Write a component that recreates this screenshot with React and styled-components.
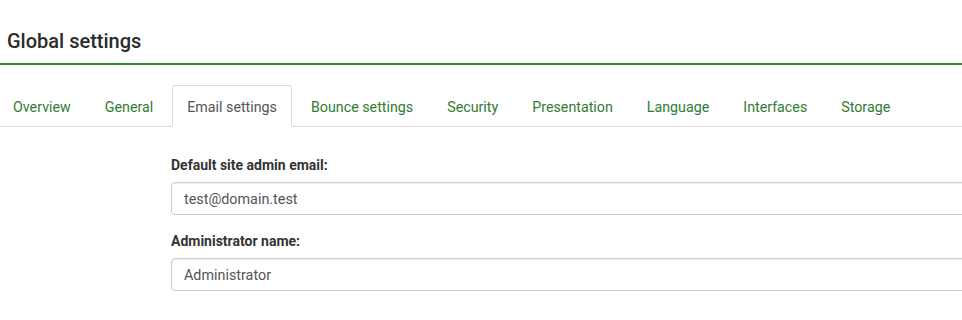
import React from "react";
import styled, { createGlobalStyle } from "styled-components";

const Global = createGlobalStyle`
  html, body { margin: 0; padding: 0; background: #fff; overflow: hidden; }
  body { font-family: Roboto, "Liberation Sans", Arial, sans-serif; font-size: 14px; line-height: 20px; color: #333; }
`;

const Page = styled.div`
  width: 962px;
  overflow: hidden;
`;

const Header = styled.div`
  padding: 29px 0 0 7px;
  height: 34px;
  border-bottom: 2px solid #2f8a35;
`;

const Title = styled.h1`
  margin: 0;
  font-size: 20px;
  font-weight: 500;
  line-height: 24px;
  color: #2b2b2b;
`;

const Tabs = styled.ul`
  list-style: none;
  margin: 20px 0 0 0;
  padding: 0;
  display: flex;
  border-bottom: 1px solid #ddd;
`;

const Tab = styled.li`
  margin: 0 4px -1px 0;
  &:first-child { margin-left: -2px; }
`;

const TabLink = styled.a`
  display: block;
  padding: 11px 14px 9px;
  font-size: 14.25px;
  line-height: 20px;
  border: 1px solid ${(p) => (p.$active ? "#ddd" : "transparent")};
  border-bottom-color: ${(p) => (p.$active ? "#fff" : "transparent")};
  border-radius: 4px 4px 0 0;
  background: ${(p) => (p.$active ? "#fff" : "transparent")};
  color: ${(p) => (p.$active ? "#555" : "#2e7d32")};
  text-decoration: none;
  cursor: pointer;
`;

const Form = styled.form`
  padding: 28px 0 0 171px;
`;

const Group = styled.div`
  margin-bottom: 16px;
`;

const Label = styled.label`
  display: block;
  font-weight: 700;
  margin-bottom: 7px;
  color: #333;
`;

const Input = styled.input`
  display: block;
  box-sizing: border-box;
  width: 900px;
  height: 33px;
  padding: 7px 12px 5px;
  font-family: inherit;
  font-size: 14.35px;
  color: #555;
  background: #fff;
  border: 1px solid #ccc;
  border-radius: 4px;
  box-shadow: inset 0 1px 1px rgba(0, 0, 0, 0.075);
  outline: none;
`;

const tabs = [
  "Overview",
  "General",
  "Email settings",
  "Bounce settings",
  "Security",
  "Presentation",
  "Language",
  "Interfaces",
  "Storage",
];

export default function App() {
  return (
    <Page>
      <Global />
      <Header>
        <Title>Global settings</Title>
      </Header>
      <Tabs>
        {tabs.map((t) => (
          <Tab key={t}>
            <TabLink $active={t === "Email settings"}>{t}</TabLink>
          </Tab>
        ))}
      </Tabs>
      <Form>
        <Group>
          <Label>Default site admin email:</Label>
          <Input defaultValue="test@domain.test" />
        </Group>
        <Group>
          <Label>Administrator name:</Label>
          <Input defaultValue="Administrator" />
        </Group>
      </Form>
    </Page>
  );
}
